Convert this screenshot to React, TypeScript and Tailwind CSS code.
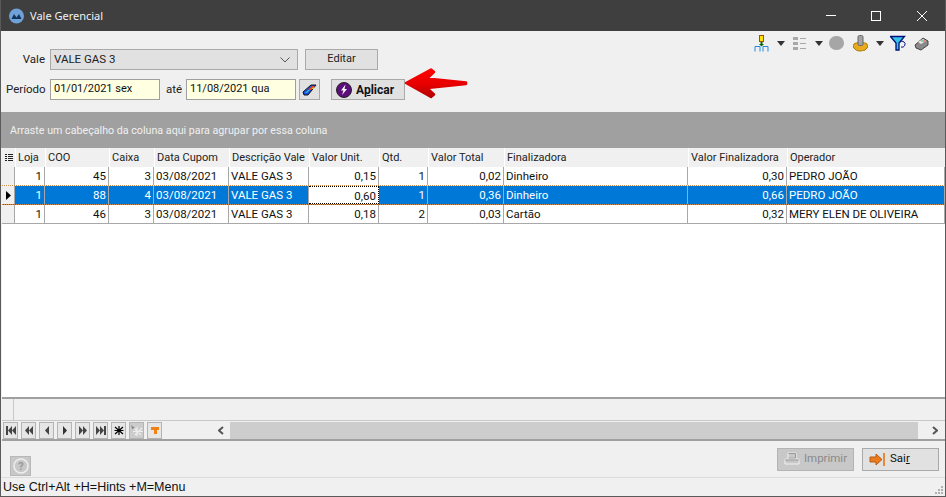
import type { ReactNode } from "react"

const cols = "grid-cols-[13px_30px_64px_45px_75px_80px_70px_49px_76px_184px_99px_1fr]"

const headers = ["Loja", "COO", "Caixa", "Data Cupom", "Descrição Vale", "Valor Unit.", "Qtd.", "Valor Total", "Finalizadora", "Valor Finalizadora", "Operador"]

const rows = [
  ["1", "45", "3", "03/08/2021", "VALE GAS 3", "0,15", "1", "0,02", "Dinheiro", "0,30", "PEDRO JOÃO"],
  ["1", "88", "4", "03/08/2021", "VALE GAS 3", "0,60", "1", "0,36", "Dinheiro", "0,66", "PEDRO JOÃO"],
  ["1", "46", "3", "03/08/2021", "VALE GAS 3", "0,18", "2", "0,03", "Cartão", "0,32", "MERY ELEN DE OLIVEIRA"],
]

// columns with numbers are right aligned
const rightCols = [0, 1, 2, 5, 6, 7, 9]

function FlatButton({ children, className }: { children: ReactNode; className: string }) {
  return (
    <div className={`flex items-center border border-[#a9a9a9] bg-[#e1e1e1] ${className}`}>
      {children}
    </div>
  )
}

function NavButton({ children, disabled }: { children: ReactNode; disabled?: boolean }) {
  return (
    <div className={`w-[15px] h-[17px] mr-[3px] flex items-center justify-center border border-[#b4b4b4] ${disabled ? "bg-[#cccccc]" : "bg-[#e6e6e6]"}`}>
      <svg width="12" height="11" viewBox="0 0 12 11">{children}</svg>
    </div>
  )
}

function Caret({ className }: { className: string }) {
  return (
    <svg width="8" height="5" viewBox="0 0 8 5" className={className}>
      <path d="M0 0h8L4 5z" fill="#333" />
    </svg>
  )
}

function Toolbar() {
  return (
    <div className="flex items-center justify-end h-[16px] pr-[16px] pt-[8px]">
      <svg width="16" height="17" viewBox="0 0 16 17">
        <rect x="5.500" y="0.500" width="4" height="6" fill="#ffe600" stroke="#a05000" />
        <path d="M7.500 7v3" stroke="#0a6a0a" strokeWidth="2" />
        <path d="M5 9h5l-2.500 2.500z" fill="#0a6a0a" />
        <path d="M1 16.500v-5h5v5M9 16.500v-5h5v5" fill="none" stroke="#1e88e5" />
      </svg>
      <Caret className="ml-[7px]" />
      <svg width="14" height="15" viewBox="0 0 14 15" className="ml-[8px]">
        <path d="M0 1h5v3H0zM0 6h5v3H0zM0 11h5v3H0z" fill="#a8a8a8" />
        <path d="M7 2h6v1H7zM7 7h6v1H7zM7 12h6v1H7z" fill="#a8a8a8" />
      </svg>
      <Caret className="ml-[8px]" />
      <div className="w-[15px] h-[14px] rounded-full bg-[#a6a6a6] ml-[6px]" />
      <svg width="15" height="17" viewBox="0 0 15 17" className="ml-[9px]">
        <path d="M1 9c2-2 11-2 13 0 1 2 1 4-1 5-1 2-3 1-5 2-2 0-4 0-6-2-2-1-2-3-1-5z" fill="#e8ab1d" stroke="#a87808" />
        <rect x="5" y="0.500" width="5" height="10" rx="1.500" fill="#a4a4a4" stroke="#666" />
      </svg>
      <Caret className="ml-[8px]" />
      <svg width="16" height="17" viewBox="0 0 16 17" className="ml-[6px]">
        <path d="M0.500 1.500h14L9 8v7H6V8z" fill="#35c4e8" stroke="#00107a" strokeWidth="1.300" />
        <path d="M10 7a3 3 0 1 1 1 5" fill="none" stroke="#00107a" />
      </svg>
      <svg width="15" height="15" viewBox="0 0 15 15" className="ml-[8px]">
        <path d="M1 9l8-7 5 3v4l-7 5-5-2z" fill="#8a8a8a" stroke="#444" />
        <path d="M4 6l5-3 3 2-5 3z" fill="#e8e8e8" />
        <path d="M7 5h2" stroke="#2fbf4a" />
        <path d="M9 5h2" stroke="#e83030" />
      </svg>
    </div>
  )
}

function FormArea() {
  return (
    <div className="relative h-[81px] bg-[#f0f0f0]">
      <Toolbar />
      <div className="flex items-center h-[21px] mt-[2px]">
        <span className="w-[44px] text-right text-[11.500px] text-[#222]">Vale</span>
        <div className="ml-[5px] w-[248px] h-[21px] flex items-center justify-between pl-[3px] pr-[7px] border border-[#a9a9a9] bg-[#e1e1e1] text-[11.500px] text-[#222]">
          VALE GAS 3
          <svg width="10" height="6" viewBox="0 0 10 6"><path d="M0.500 0.500L5 5l4.500-4.500" fill="none" stroke="#555" /></svg>
        </div>
        <FlatButton className="ml-[7px] w-[73px] h-[21px] justify-center text-[11px] text-[#222]">Editar</FlatButton>
      </div>
      <div className="flex items-center h-[21px] mt-[9px]">
        <span className="ml-[5px] w-[39px] text-[11.500px] text-[#222]">Período</span>
        <div className="ml-[5px] w-[110px] h-[21px] pl-[3px] flex items-center border border-[#a0a0a0] bg-[#ffffe1] text-[11px] text-[#111]">01/01/2021 sex</div>
        <span className="ml-[6px] w-[20px] text-[11.500px] text-[#222]">até</span>
        <div className="w-[110px] h-[21px] pl-[3px] flex items-center border border-[#a0a0a0] bg-[#ffffe1] text-[11px] text-[#111]">11/08/2021 qua</div>
        <FlatButton className="ml-[3px] w-[21px] h-[21px] justify-center">
          <svg width="15" height="12" viewBox="0 0 15 12">
            <path d="M1 8l8-7h5L6 11H2z" fill="#1a4fd8" stroke="#111" />
            <path d="M6 6l4-4h3l-4 4z" fill="#e8402a" />
            <path d="M3 9l3-3h2l-3 3z" fill="#30b0e0" />
            <path d="M9.500 5l1.500-1.500h2l-1.500 1.500z" fill="#f5e020" />
          </svg>
        </FlatButton>
        <FlatButton className="ml-[11px] w-[74px] h-[21px] pl-[4px] text-[12px] font-bold text-[#111]">
          <svg width="16" height="16" viewBox="0 0 16 16" className="mr-[4px] shrink-0">
            <circle cx="8" cy="8" r="7.500" fill="#5c0f7a" stroke="#222" />
            <path d="M9.500 2.500L5 8.500h2.500L6 13l5-6H8.500z" fill="#fff" />
          </svg>
          <span>A<u>p</u>licar</span>
        </FlatButton>
      </div>
      {/* red arrow sits on top of the form */}
      <svg width="66" height="32" viewBox="0 0 66 32" className="absolute left-[403px] top-[36px]">
        <defs>
          <linearGradient id="arrowShade" x1="0" y1="0" x2="0" y2="1">
            <stop offset="0" stopColor="#ff0000" />
            <stop offset="0.55" stopColor="#e60000" />
            <stop offset="1" stopColor="#b40000" />
          </linearGradient>
        </defs>
        <path d="M2 16L27 2.500 30 5 23 11.500 62 15.500v1.500L23 21 30 27.500 27 30z" fill="url(#arrowShade)" stroke="url(#arrowShade)" strokeWidth="2.500" strokeLinejoin="round" />
      </svg>
    </div>
  )
}

function Grid() {
  return (
    <div className="flex-1 ml-[1px] flex flex-col bg-white border-b-2 border-[#a0a0a0] min-h-0">
      <div className={`grid ${cols} h-[19px] bg-[#f0f0f0]`}>
        <div className="flex items-center justify-center bg-[#f0f0f0]">
          <svg width="8" height="9" viewBox="0 0 8 9"><path d="M0 1h2v1H0zM3 1h5v1H3zM0 3h2v1H0zM3 3h5v1H3zM0 5h2v1H0zM3 5h5v1H3zM0 7h2v1H0zM3 7h5v1H3z" fill="#222" /></svg>
        </div>
        {headers.map((h) => (
          <div key={h} className="pl-[2px] pt-[2px] text-[11px] leading-[15px] text-[#222] whitespace-nowrap overflow-hidden border-l border-white">{h}</div>
        ))}
      </div>
      {rows.map((row, r) => {
        const selected = r === 1
        const dotted = r === 0 || r === 1
        return (
          <div key={r} className={`grid ${cols} h-[19px] border-b ${dotted ? "border-dotted border-b-[#d08c4a]" : "border-[#a8a8a8]"} ${selected ? "bg-[#0078d7]" : ""}`}>
            <div className="flex items-center justify-center bg-[#f0f0f0] border-r border-[#a8a8a8]">
              {selected && <svg width="5" height="9" viewBox="0 0 5 9"><path d="M0 0l5 4.500L0 9z" fill="#000" /></svg>}
            </div>
            {row.map((v, c) => {
              const focused = selected && c === 5
              const color = focused ? "text-[#111] bg-white border-y border-dotted border-black" : selected ? "text-white" : "text-[#111]"
              return (
                <div key={c} className={`px-[2px] text-[11.500px] leading-[18px] whitespace-nowrap overflow-hidden border-r border-[#a8a8a8] ${rightCols.includes(c) ? "text-right" : "text-left"} ${color}`}>
                  {v}
                </div>
              )
            })}
          </div>
        )
      })}
    </div>
  )
}

function NavBar() {
  return (
    <div className="flex items-center h-[21px] ml-[1px] pl-[1px] border-t border-b-2 border-t-[#c8c8c8] border-b-[#a0a0a0] bg-[#f0f0f0]">
      <NavButton><path d="M1 1h2v9H1zM7 1v9L3 5.500zM11 1v9L7 5.500z" fill="#444" /></NavButton>
      <NavButton><path d="M6 1v9L2 5.500zM10 1v9L6 5.500z" fill="#444" /></NavButton>
      <NavButton><path d="M8 1v9L4 5.500z" fill="#444" /></NavButton>
      <NavButton><path d="M4 1v9l4-4.500z" fill="#333" /></NavButton>
      <NavButton><path d="M2 1v9l4-4.500zM6 1v9l4-4.500z" fill="#444" /></NavButton>
      <NavButton><path d="M1 1v9l4-4.500zM5 1v9l4-4.500zM9 1h2v9H9z" fill="#444" /></NavButton>
      <NavButton><path d="M6 1v9M2 2l8 7M10 2l-8 7M1.500 5.500h9" stroke="#000" strokeWidth="1.200" /></NavButton>
      <NavButton disabled><path d="M6 2v9M3 3l7 7M11 3l-7 7M2 6.500h10" stroke="#efefef" strokeWidth="1.200" /><path d="M0 0l4 3-3 1z" fill="#888" /></NavButton>
      <NavButton><path d="M2 2h8v3H8v4H5V5H2z" fill="#f08010" /></NavButton>
      <div className="flex-1 flex items-center h-[17px] ml-[53px]">
        <svg width="6" height="9" viewBox="0 0 6 9"><path d="M5 1L1 4.500 5 8" fill="none" stroke="#555" strokeWidth="2" /></svg>
        <div className="flex-1 h-[17px] ml-[6px] bg-[#cdcdcd]" />
        <svg width="6" height="9" viewBox="0 0 6 9" className="ml-[14px] mr-[7px]"><path d="M1 1l4 3.500L1 8" fill="none" stroke="#555" strokeWidth="2" /></svg>
      </div>
    </div>
  )
}

export default function App() {
  return (
    <div className="w-[946px] h-[497px] flex flex-col overflow-hidden border-x border-b border-[#5a5a5a] bg-[#f0f0f0] font-['Roboto',sans-serif]">
      <div className="h-[31px] shrink-0 flex items-center bg-[#3f3f3f] pl-[7px] text-white">
        <svg width="17" height="16" viewBox="0 0 17 16">
          <circle cx="8.500" cy="8" r="7.500" fill="#6fa0d8" />
          <path d="M3.500 11l2.500-5 2.500 3.500L11 6l2.500 5z" fill="#12345c" />
        </svg>
        <span className="ml-[5px] mt-[1px] text-[11px] text-[#f2f2f2] font-['Noto_Sans',sans-serif]">Vale Gerencial</span>
        <div className="flex-1" />
        <svg width="10" height="2" viewBox="0 0 10 2"><path d="M0 .5h10" stroke="#fff" /></svg>
        <svg width="10" height="10" viewBox="0 0 10 10" className="ml-[35px]"><rect x=".5" y=".5" width="9" height="9" fill="none" stroke="#fff" /></svg>
        <svg width="10" height="10" viewBox="0 0 10 10" className="ml-[36px] mr-[18px]"><path d="M0 0l10 10M10 0L0 10" stroke="#fff" /></svg>
      </div>
      <FormArea />
      <div className="h-[36px] shrink-0 flex items-center pl-[9px] pt-[3px] bg-[#a0a0a0] text-[10.700px] text-[#f0f0f0]">
        Arraste um cabeçalho da coluna aqui para agrupar por essa coluna
      </div>
      <Grid />
      <div className="h-[21px] shrink-0 ml-[1px] flex bg-[#f0f0f0]">
        <div className="w-[12px] border-r border-[#c8c8c8]" />
      </div>
      <NavBar />
      <div className="h-[36px] shrink-0 flex items-center pl-[9px] pr-[6px] bg-[#f0f0f0]">
        <div className="mt-[13px] w-[21px] h-[20px] flex items-center justify-center bg-[#c8c8c8] border border-[#b8b8b8]">
          <svg width="16" height="16" viewBox="0 0 16 16">
            <circle cx="8" cy="8" r="7" fill="none" stroke="#eee" strokeWidth="1.500" />
            <text x="8" y="12" textAnchor="middle" fontSize="11" fontWeight="700" fill="#999">?</text>
          </svg>
        </div>
        <div className="flex-1" />
        <div className="w-[77px] h-[23px] flex items-center justify-center bg-[#c8c8c8] border border-[#b4b4b4] text-[11.500px] text-[#8a8a8a]">
          <svg width="16" height="14" viewBox="0 0 16 14" className="mr-[4px]">
            <path d="M4 1h8v5H4zM1 7h14v5H1z" fill="none" stroke="#f2f2f2" />
            <path d="M4.500 1.500h7v4.500h-7M1 8h14" fill="none" stroke="#999" />
          </svg>
          Imprimir
        </div>
        <FlatButton className="ml-[8px] w-[77px] h-[23px] pl-[6px] text-[11.500px] text-[#111]">
          <svg width="16" height="15" viewBox="0 0 16 15" className="mr-[5px]">
            <path d="M1 5h6V2l6 5.500L7 13v-3H1z" fill="#ec7a1c" stroke="#b85a10" />
            <path d="M14 1h2v13h-2z" fill="#e8883c" />
          </svg>
          <span>Sai<u>r</u></span>
        </FlatButton>
      </div>
      <div className="relative h-[19px] shrink-0 flex items-center pl-[2px] pt-[1px] border-t border-[#dcdcdc] text-[12.500px] text-[#111] bg-[#f0f0f0] font-['Liberation_Sans',sans-serif]">
        Use Ctrl+Alt +H=Hints +M=Menu
        <svg width="9" height="9" viewBox="0 0 9 9" className="absolute right-[1px] bottom-[1px]">
          <path d="M6 0h2v2H6zM3 3h2v2H3zM6 3h2v2H6zM0 6h2v2H0zM3 6h2v2H3zM6 6h2v2H6z" fill="#b0b0b0" />
        </svg>
      </div>
    </div>
  )
}
